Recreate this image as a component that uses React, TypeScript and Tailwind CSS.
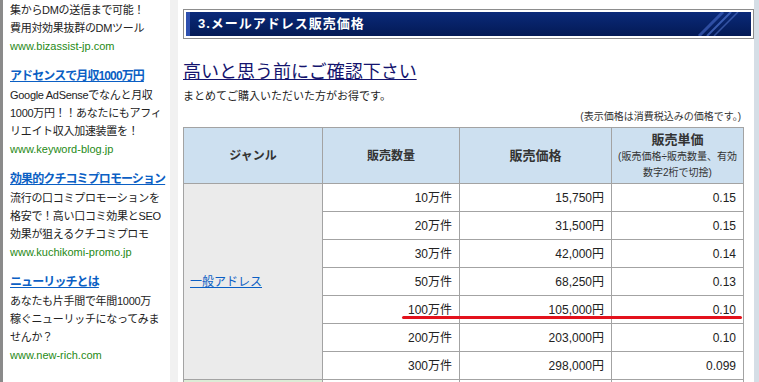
import React from "react";

const ads = [
  {
    title: null as string | null,
    lines: ["集からDMの送信まで可能！", "費用対効果抜群のDMツール"],
    url: "www.bizassist-jp.com",
  },
  {
    title: "アドセンスで月収1000万円",
    lines: ["Google AdSenseでなんと月収", "1000万円！！あなたにもアフィ", "リエイト収入加速装置を！"],
    url: "www.keyword-blog.jp",
  },
  {
    title: "効果的クチコミプロモーション",
    lines: ["流行の口コミプロモーションを", "格安で！高い口コミ効果とSEO", "効果が狙えるクチコミプロモ"],
    url: "www.kuchikomi-promo.jp",
  },
  {
    title: "ニューリッチとは",
    lines: ["あなたも片手間で年間1000万", "稼ぐニューリッチになってみま", "せんか？"],
    url: "www.new-rich.com",
  },
];

const rows = [
  { qty: "10万件", price: "15,750円", unit: "0.15" },
  { qty: "20万件", price: "31,500円", unit: "0.15" },
  { qty: "30万件", price: "42,000円", unit: "0.14" },
  { qty: "50万件", price: "68,250円", unit: "0.13" },
  { qty: "100万件", price: "105,000円", unit: "0.10" },
  { qty: "200万件", price: "203,000円", unit: "0.10" },
  { qty: "300万件", price: "298,000円", unit: "0.099" },
];

function Sidebar() {
  return (
    <aside className="flex w-[178px] shrink-0">
      <div className="w-[170px] overflow-hidden border-l-[3px] border-[#8a8a8a] bg-white pl-[7px] pt-[1px] text-[11px] leading-[18px] tracking-[-0.3px] text-[#222]">
        {ads.map((ad, i) => (
          <div key={i} className={i === 0 ? "" : "mt-[11px]"}>
            {ad.title && (
              <a className="block whitespace-nowrap text-[12px] font-bold leading-[20px] tracking-[-0.9px] text-[#0b5fc4] underline">{ad.title}</a>
            )}
            {ad.lines.map((l) => (
              <div key={l} className="whitespace-nowrap">{l}</div>
            ))}
            <div className="text-[11px] tracking-normal text-[#1f8a16]">{ad.url}</div>
          </div>
        ))}
      </div>
      <div className="w-[8px] bg-[#f1f1f1]" />
    </aside>
  );
}

function TitleBar() {
  return (
    <div className="border border-[#8d8d8d] bg-white p-[2px]">
      <div className="relative h-[24px] overflow-hidden border-l-[4px] border-[#2d4fae] bg-gradient-to-b from-[#0b2a7a] to-[#041a55] pl-[8px] text-[13px] font-bold leading-[24px] tracking-[1px] text-white">
        3.メールアドレス販売価格
        <svg className="absolute right-[4px] top-0" width="70" height="24" viewBox="0 0 70 24">
          <path d="M22 24 L46 0" stroke="#4f73d6" strokeOpacity="0.55" strokeWidth="3" />
          <path d="M30 24 L54 0" stroke="#5a80e0" strokeOpacity="0.6" strokeWidth="2" />
          <path d="M37 24 L61 0" stroke="#6b8fe8" strokeOpacity="0.45" strokeWidth="1.5" />
        </svg>
      </div>
    </div>
  );
}

function PriceTable() {
  const cell = "border border-[#a3a3a3] h-[28px] px-[7px] text-right text-[12px] text-[#222]";
  return (
    <table className="w-[560px] table-fixed border-collapse">
      <colgroup>
        <col className="w-[139px]" />
        <col className="w-[137px]" />
        <col className="w-[152px]" />
        <col className="w-[132px]" />
      </colgroup>
      <thead>
        <tr className="h-[56px] bg-[#cde0f0] text-[#333]">
          <th className="border border-[#a3a3a3] text-[12px] font-bold">ジャンル</th>
          <th className="border border-[#a3a3a3] text-[12px] font-bold">販売数量</th>
          <th className="border border-[#a3a3a3] text-[13px] font-bold">販売価格</th>
          <th className="border border-[#a3a3a3] align-middle font-bold">
            <div className="text-[13px] leading-[18px]">販売単価</div>
            <div className="text-[10px] font-normal leading-[16px]">(販売価格÷販売数量、有効<br />数字2桁で切捨)</div>
          </th>
        </tr>
      </thead>
      <tbody>
        {rows.map((r, i) => (
          <tr key={r.qty}>
            {i === 0 && (
              <td rowSpan={7} className="border border-[#a3a3a3] bg-[#ebebeb] px-[6px] align-middle text-[12px]">
                <a className="text-[#0b5fc4] underline">一般アドレス</a>
              </td>
            )}
            <td className={cell}>{r.qty}</td>
            <td className={cell}>{r.price}</td>
            <td className={cell}>{r.unit}</td>
          </tr>
        ))}
        <tr>
          <td className="h-[28px] border border-[#a3a3a3] bg-[#dcecd6]" />
          <td className={cell} />
          <td className={cell} />
          <td className={cell} />
        </tr>
      </tbody>
    </table>
  );
}

export default function App() {
  return (
    <div className="relative flex h-[382px] w-[759px] overflow-hidden bg-white font-[Liberation_Sans,Noto_Sans_CJK_JP,sans-serif]">
      <Sidebar />
      <main className="w-[576px] shrink-0 pl-[5px] pt-[9px]">
        <TitleBar />
        <h2 className="mt-[21px] text-[18px] leading-[24px] text-[#14146e] underline">高いと思う前にご確認下さい</h2>
        <p className="mt-[4px] text-[11px] leading-[16px] text-[#222]">まとめてご購入いただいた方がお得です。</p>
        <p className="mt-[5px] w-[558px] text-right text-[10px] leading-[16px] text-[#333]">(表示価格は消費税込みの価格です。)</p>
        <div className="mt-[2px]">
          <PriceTable />
        </div>
      </main>
      <div className="flex-1 bg-[#d5dee6]" />
      {/* red marker under the 100万件 row */}
      <div className="absolute left-[402px] top-[316px] h-[3px] w-[340px] rounded-full bg-[#e3121c]" />
    </div>
  );
}
